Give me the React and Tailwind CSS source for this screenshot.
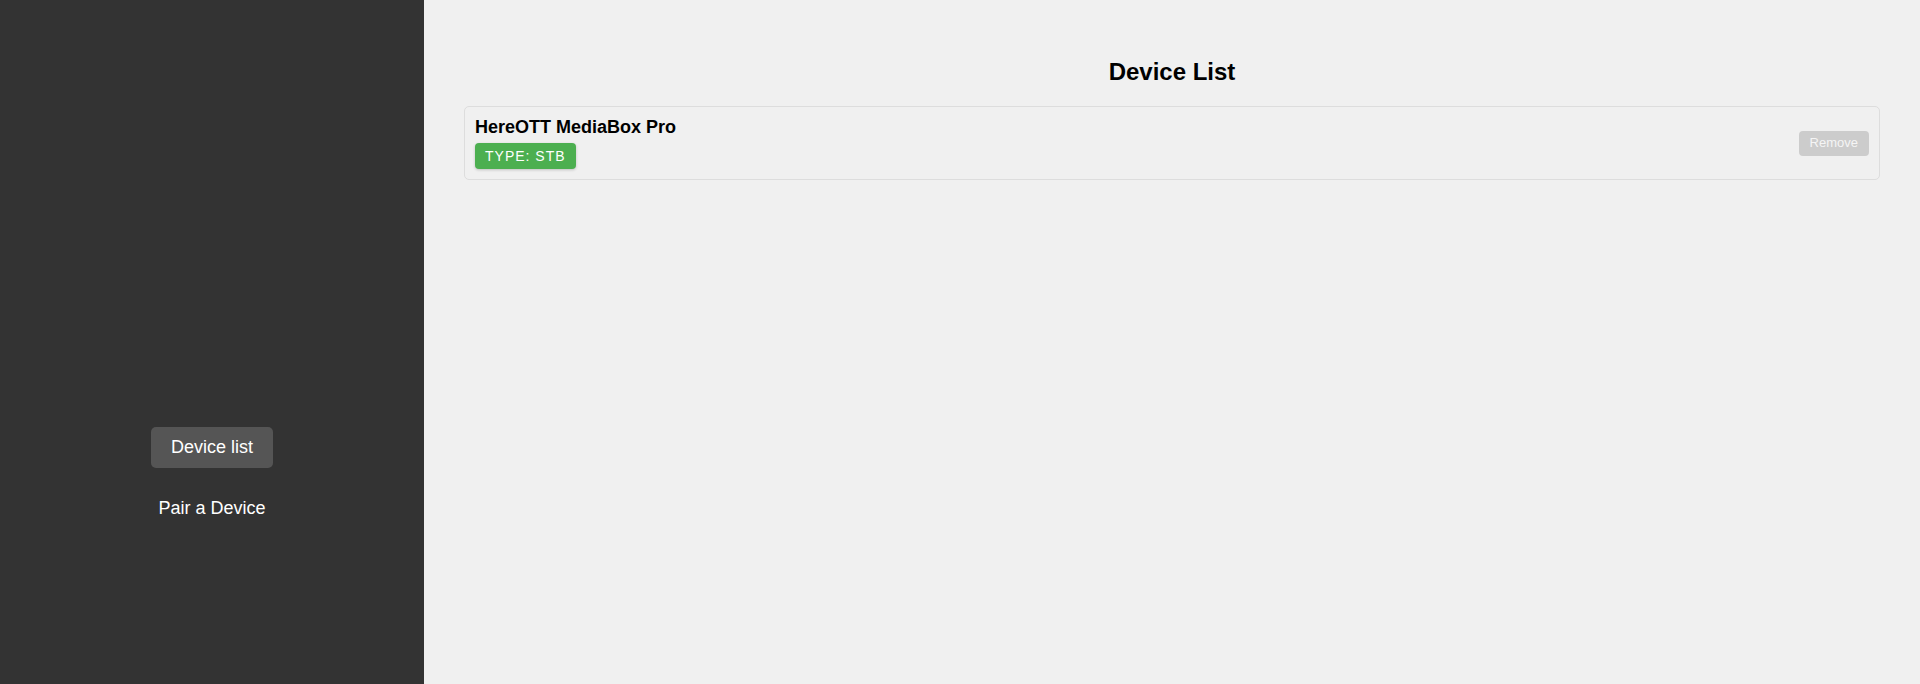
const navItems = [
  { name: 'Device list', active: true },
  { name: 'Pair a Device', active: false },
];

const devices = [{ id: 1, name: 'HereOTT MediaBox Pro', type: 'STB' }];

function Sidebar() {
  return (
    <aside className="w-[424px] shrink-0 bg-[#333333] h-screen">
      <nav className="flex flex-col items-center gap-[20px] pt-[427px]">
        {navItems.map((item) => (
          <button
            key={item.name}
            className={
              item.active
                ? 'px-[20px] py-[10px] rounded-[5px] bg-[#555555] text-white text-[18px] leading-[21px]'
                : 'px-[20px] py-[10px] rounded-[5px] text-white text-[18px] leading-[21px]'
            }
          >
            {item.name}
          </button>
        ))}
      </nav>
    </aside>
  );
}

function DeviceCard({ device }) {
  return (
    <div className="flex items-center justify-between border border-[#dddddd] rounded-[5px] px-[10px] py-[10px]">
      <div className="flex flex-col items-start">
        <div className="text-[18px] leading-[20px] font-bold text-black">{device.name}</div>
        <span className="mt-[6px] h-[26px] flex items-center px-[10px] rounded-[4px] bg-[#4caf50] text-white text-[14px] tracking-[1px] shadow-[0_1px_3px_rgba(0,0,0,0.2)]">
          TYPE: {device.type}
        </span>
      </div>
      <button className="h-[25px] px-[11px] rounded-[4px] bg-[#cccccc] text-[#f5f5f5] text-[13px]">
        Remove
      </button>
    </div>
  );
}

export default function App() {
  return (
    <div className="flex h-screen overflow-hidden bg-[#f0f0f0] font-['Liberation_Sans',Arial,sans-serif]">
      <Sidebar />
      <main className="flex-1 px-[40px] pt-[58px]">
        <h2 className="text-center text-[24px] leading-[28px] font-bold text-black">Device List</h2>
        <div className="mt-[20px] flex flex-col gap-[10px]">
          {devices.map((d) => (
            <DeviceCard key={d.id} device={d} />
          ))}
        </div>
      </main>
    </div>
  );
}
